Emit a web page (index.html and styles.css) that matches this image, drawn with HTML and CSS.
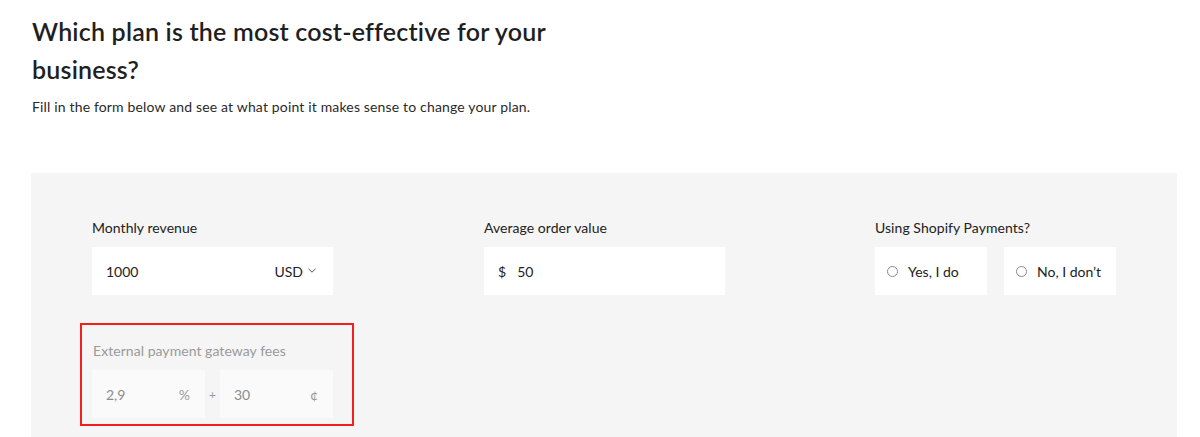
FILE: index.html
```html
<!DOCTYPE html>
<html lang="en">
<head>
<meta charset="utf-8">
<title>Plan calculator</title>
<link rel="stylesheet" href="styles.css">
</head>
<body>
<div class="page">
  <h1 class="title">Which plan is the most cost-effective for your<br>business?</h1>
  <p class="subtitle">Fill in the form below and see at what point it makes sense to change your plan.</p>
  <section class="panel">
    <div class="grid">
      <div class="field">
        <div class="label">Monthly revenue</div>
        <div class="input input-wide">
          <span class="value">1000</span>
          <span class="currency">USD
            <svg class="chev" width="8" height="5" viewBox="0 0 8 5"><path d="M0.5 0.8 L4 4.2 L7.5 0.8" fill="none" stroke="#555" stroke-width="1"/></svg>
          </span>
        </div>
      </div>
      <div class="field">
        <div class="label">Average order value</div>
        <div class="input input-wide">
          <span class="prefix">$</span><span class="value">50</span>
        </div>
      </div>
      <div class="field">
        <div class="label">Using Shopify Payments?</div>
        <div class="radios">
          <div class="input radio"><span class="dot"></span>Yes, I do</div>
          <div class="input radio"><span class="dot"></span>No, I don’t</div>
        </div>
      </div>
      <div class="field fees">
        <div class="label muted">External payment gateway fees</div>
        <div class="fee-row">
          <div class="input fee"><span class="value">2,9</span><span class="unit">%</span></div>
          <span class="plus">+</span>
          <div class="input fee"><span class="value">30</span><span class="unit">¢</span></div>
        </div>
      </div>
    </div>
  </section>
</div>
</body>
</html>
```

FILE: styles.css
```css
* { box-sizing: border-box; }
html, body { margin: 0; padding: 0; background: #fff; }
body {
  font-family: "Lato", "Noto Sans", sans-serif;
  color: #212121;
  height: 437px;
  overflow: hidden;
}
.page { padding-top: 12px; }
.title {
  margin: 0 0 9px 32px;
  font-size: 25px;
  line-height: 38px;
  font-weight: 600;
  color: #1f1f1f;
  letter-spacing: 0.2px;
}
.subtitle {
  margin: 0 0 56px 32px;
  font-size: 14px;
  line-height: 20px;
  color: #2a2a2a;
  letter-spacing: 0.16px;
}
.panel {
  margin-left: 31px;
  width: 1146px;
  height: 264px;
  background: #f5f5f5;
  padding: 46px 0 0 61px;
}
.grid {
  display: grid;
  grid-template-columns: 392px 391px auto;
  row-gap: 28px;
}
.label {
  font-size: 14px;
  line-height: 18px;
  margin-bottom: 10px;
  color: #222;
  letter-spacing: 0.05px;
}
.label.muted { color: #9a9a9a; }
.input {
  background: #fff;
  height: 48px;
  display: flex;
  align-items: center;
  font-size: 14px;
  color: #222;
}
.input-wide { width: 241px; padding: 0 17px 0 14px; }
.value { flex: 1; }
.currency { display: flex; align-items: center; gap: 5px; }
.chev { margin-top: -2px; }
.prefix { margin-right: 11px; }
.radios { display: flex; gap: 17px; }
.radio { width: 112px; padding-left: 12px; gap: 10px; }
.dot {
  width: 11px; height: 11px;
  border: 1px solid #8a8a8a;
  border-radius: 50%;
  background: #fff;
}
.fees {
  margin-left: -12px;
  width: 274px;
  border: 2px solid #f21f1f;
  padding: 17px 0 6px 10px;
}
.fees .label { margin-left: 1px; }
.fee-row { display: flex; align-items: center; }
.fee {
  width: 113px;
  background: #fafafa;
  color: #8c8c8c;
  padding: 0 15px 0 14px;
}
.fee .unit { color: #9a9a9a; }
.plus {
  width: 15px;
  text-align: center;
  color: #9a9a9a;
  font-size: 12px;
}
```
